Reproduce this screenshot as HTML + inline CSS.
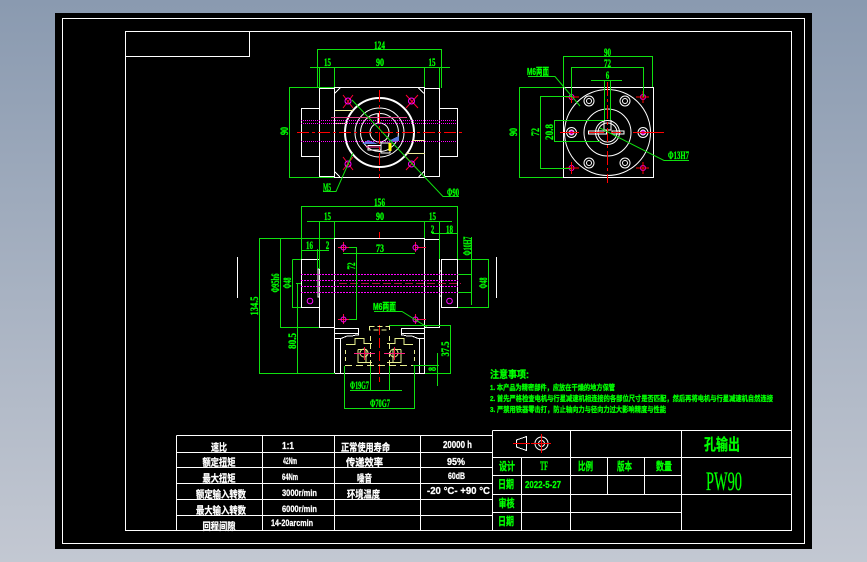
<!DOCTYPE html>
<html><head><meta charset="utf-8"><style>
html,body{margin:0;padding:0;width:867px;height:562px;overflow:hidden;background:linear-gradient(#8a9ab0,#c3c8d2)}
svg{position:absolute;left:0;top:0}
text{font-family:"Liberation Sans","Noto Sans CJK SC",sans-serif;font-weight:700}
.g text{fill:#0f0;stroke:#0f0;stroke-width:.3}
.w text{fill:#fff;stroke:#fff;stroke-width:.25}
.d text{font-family:"Liberation Serif","Noto Sans CJK SC",serif;font-size:12px}
</style></head><body>
<svg width="867" height="562" viewBox="0 0 867 562" xmlns="http://www.w3.org/2000/svg" shape-rendering="crispEdges">
<rect x="55" y="13" width="757" height="536" fill="#000"/>
<g fill="none" stroke="#fff" stroke-width="1">
<rect x="62.5" y="18.5" width="742" height="525"/>
<rect x="125.5" y="31.5" width="666" height="499"/>
<path d="M125.5 56.5H249.5V31.5"/>
<path d="M176.5 435.5H492.5M176.5 452.5H492.5M176.5 467.5H492.5M176.5 483.5H492.5M176.5 499.5H492.5M176.5 515.5H492.5M176.5 435.5V530.5M262.5 435.5V530.5M334.5 435.5V530.5M420.5 435.5V530.5M492.5 430.5V530.5"/>
<path d="M492.5 430.5H791.5M492.5 457.5H791.5M492.5 475.5H681.5M492.5 494.5H791.5M492.5 512.5H681.5M521.5 457.5V530.5M570.5 430.5V530.5M607.5 457.5V494.5M644.5 457.5V494.5M681.5 430.5V530.5"/>
<path d="M526.5 436.5V450.5L516.5 447V440Z"/>
<circle cx="541.5" cy="443.5" r="6.5" shape-rendering="auto"/><circle cx="541.5" cy="443.5" r="3" shape-rendering="auto"/>
</g>
<path d="M513 443.5H530M531 443.5H551M541.5 434V453" stroke="#f00" fill="none"/>

<!-- TOP VIEW -->
<g fill="none" stroke="#fff">
<rect x="319.5" y="88.5" width="15" height="88"/><rect x="424.5" y="88.5" width="15" height="88"/>
<rect x="334.5" y="87.5" width="90" height="90"/>
<rect x="301.5" y="108.5" width="18" height="48"/><rect x="439.5" y="108.5" width="18" height="48"/>
<path d="M334.5 93.5L340 88M424 93.5L418.5 88M334.5 171.5L340 177M424 171.5L418.5 177"/>
<circle cx="379.5" cy="132.5" r="34.5" stroke-width="2" shape-rendering="auto"/>
<circle cx="379.5" cy="132.5" r="24.5" shape-rendering="auto"/><circle cx="379.5" cy="132.5" r="19" shape-rendering="auto"/><circle cx="379.5" cy="132.5" r="9.5" shape-rendering="auto"/>
<path d="M368 145.5H381V150H368ZM381 143H390V153H381Z"/>
<path d="M378.5 114V123" stroke-width="2"/>
</g>
<path d="M362 144L368 140 378 144ZM388 141L399 136V141L394 142Z" fill="#5577dd"/>
<path d="M366 147H380" stroke="#ff3399"/>
<path d="M390 143V151" stroke="#ff0" stroke-width="3"/>
<path d="M335 110.5H353M336 123.5H348M412 140.5H425M406 153.5H425" stroke="#ee9" fill="none"/>
<path d="M331 117.5H407" stroke="#e0408a" fill="none"/>
<path d="M301 120.5H457M301 123.5H457M301 141.5H457" stroke="#f0f" stroke-dasharray="1 1" fill="none"/>
<path d="M297 132.5H465M379.5 90V178" stroke="#f00" stroke-dasharray="12 3 3 3" fill="none"/>
<g stroke="#f03" fill="none" shape-rendering="auto">
<path d="M343 95L353 108M353 95L343 108M406 95L418 108M418 95L406 108M343 157L353 170M353 157L343 170M406 157L418 170M418 157L406 170"/></g>
<g fill="none" stroke="#f0f" shape-rendering="auto"><circle cx="348" cy="101" r="3"/><circle cx="411.500" cy="101" r="3"/><circle cx="348" cy="164" r="3"/><circle cx="411.500" cy="164" r="3"/></g>
<g fill="none" stroke="#10e010">
<path d="M317.5 88V49.5H441.5V88M310 67.5H450M319.5 67V88M334.5 67V87M424.500 67V87M439.500 67V88"/>
<path d="M334 87.500H289.500V177.500H334"/>
<path d="M323 191.500H336L353 153" shape-rendering="auto"/>
<path d="M352 100L443 196.500H459" shape-rendering="auto"/>
</g>

<!-- RIGHT VIEW -->
<g fill="none" stroke="#fff">
<rect x="563.500" y="87.500" width="90" height="90"/>
<g shape-rendering="auto">
<circle cx="607.500" cy="132.500" r="43"/><circle cx="607.500" cy="132.500" r="23.500"/><circle cx="607.500" cy="132.500" r="12"/><circle cx="607.500" cy="132.500" r="9.500"/>
<circle cx="589" cy="101" r="5"/><circle cx="589" cy="101" r="2.500"/>
<circle cx="625" cy="101" r="5"/><circle cx="625" cy="101" r="2.500"/>
<circle cx="589" cy="163" r="5"/><circle cx="589" cy="163" r="2.500"/>
<circle cx="625" cy="163" r="5"/><circle cx="625" cy="163" r="2.500"/>
<circle cx="571.500" cy="132.500" r="5"/><circle cx="571.500" cy="132.500" r="2.500"/>
<circle cx="643" cy="132.500" r="5"/><circle cx="643" cy="132.500" r="2.500"/></g>
<rect x="588.500" y="131" width="18" height="3"/><rect x="612" y="131" width="12" height="3"/>
<path d="M604 120V130H611V120"/>
</g>
<g fill="none" stroke="#f0f" shape-rendering="auto"><circle cx="571.500" cy="97" r="2.500"/><circle cx="643" cy="97" r="2.500"/><circle cx="571.500" cy="168" r="2.500"/><circle cx="643" cy="168" r="2.500"/><circle cx="571.500" cy="132.500" r="1.500"/><circle cx="643" cy="132.500" r="1.500"/></g>
<path d="M560 132.500H579M589 132.500H604M611 132.500H621M633 132.500H664M565.500 97H579M636 97H649M565.500 168H579M636 168H649M571.500 91V103M643 91V103M571.500 162V174M643 162V174" stroke="#f00" fill="none"/>
<path d="M607.500 82V183" stroke="#f00" fill="none" stroke-dasharray="14 3 3 3"/>
<g fill="none" stroke="#10e010">
<path d="M563.500 87V56.500H652.500V87M571.500 97V67.500H643.500V97M591 80.500H622M604.500 81V120M610.500 81V120"/>
<path d="M563 87.500H519.500V177.500H563M571 96.500H540.500V168.500H571M604 120.500H554.500V141.500H600"/>
<path d="M528 76.500H555L580 106" shape-rendering="auto"/>
<path d="M600 128L664 160.500H689" shape-rendering="auto"/>
</g>

<!-- FRONT VIEW -->
<g fill="none" stroke="#fff">
<rect x="334.500" y="238.500" width="90" height="135"/>
<path d="M334.500 238.500H319.500V327.500H334.500M424.500 239.500H439.500V327.500H424.500"/>
<path d="M319.500 269H318V297H319.500M439.500 271H441.500V296H439.500"/>
<rect x="301.500" y="259.500" width="18" height="48"/><rect x="441.500" y="259.500" width="16" height="48"/>
<path d="M334.500 328.500H358.500V333.500H334.500M424.500 328.500H401.500V333.500H424.500M334.500 338.500H341L347 336H352L356 335H358.500V333.500M424.500 338.500H418L412 336H407L403 335H401.500V333.500"/>
<path d="M340.500 338V373M419.500 338V373"/>
</g>
<path d="M237.500 257V298M496.500 257V298" stroke="#fff" fill="none"/>
<g fill="none" stroke="#f0f" shape-rendering="auto"><circle cx="310" cy="301" r="2.800"/><circle cx="449.500" cy="301" r="2.800"/></g>
<path d="M301 274.500H458M301 280.500H458M301 286.500H458M301 292.500H458" stroke="#f0f" stroke-dasharray="2 1" fill="none"/>
<path d="M339 283.500H461" stroke="#b01040" stroke-dasharray="8 3" fill="none"/>
<path d="M379.500 232V238M379.500 325V382" stroke="#f00" stroke-dasharray="10 3" fill="none"/>
<g fill="none" stroke="#e8f090">
<path d="M369.500 326.500H389.500M369.500 326V330H389.500V326M370.500 336V372M389.500 336V372" stroke-dasharray="5 3"/>
<path d="M346 344.500H355V338.500H364V343.500H372M413 344.500H404V338.500H395V343.500H387M358 349.500H366V362.500H372M401 349.500H393V362.500H387M358 349.500V362.500H372M401 349.500V362.500H387"/>
<path d="M345.500 350V362M414.500 350V362" stroke-dasharray="4 3"/>
<path d="M345 365.500H415" stroke-dasharray="7 4"/>
<circle cx="364" cy="353" r="4" shape-rendering="auto"/><circle cx="394" cy="353" r="4" shape-rendering="auto"/>
</g>
<path d="M354 353.500H375M384 353.500H405" stroke="#ff2080" fill="none"/>
<path d="M364.500 347V360M394.500 347V360M338 247.500H349M415 247.500H426M338 319.500H349M415 319.500H426M343.500 242V252M415.500 242V252M343.500 314V324M415.500 314V324" stroke="#f01040" fill="none"/>
<g fill="none" stroke="#f0f" shape-rendering="auto"><circle cx="343.500" cy="247.500" r="2.500"/><circle cx="415.500" cy="247.500" r="2.500"/><circle cx="343.500" cy="319.500" r="2.500"/><circle cx="415.500" cy="319.500" r="2.500"/></g>
<g fill="none" stroke="#10e010">
<path d="M301.500 259V206.500H457.500V259M307 221.500H452M319.500 221V269M334.500 221V238M424.500 221V238M439.500 221V259M432 233.500H457"/>
<path d="M301 250.500H329M317.500 249V269"/>
<path d="M259 238.500H334M259.500 238V373.500H335M280.500 239V327.500H319M292.500 259.500H301M292.500 259.500V307.500H301"/>
<path d="M296 283.500H301M297.500 283V373"/>
<path d="M458 259.500H488.500V307.500H458M458 274.500H472M458 292.500H472M471.500 237V305"/>
<path d="M343 253.500H415M349 247.500H356.500V319.500H349"/>
<path d="M374 311.500H402L427 327" shape-rendering="auto"/>
<path d="M389 325.500H450.500V373.500H425M413 365.500H439M437.500 353V386"/>
<path d="M350 390.500H402M370.500 366V390M389.500 366V390"/>
<path d="M344.500 366V408.500H414.500V366"/>
</g>

<!-- dim text -->
<g class="g d" text-anchor="middle">
<text x="379.500" y="49" textLength="11" lengthAdjust="spacingAndGlyphs">124</text>
<text x="327.500" y="66" textLength="7" lengthAdjust="spacingAndGlyphs">15</text><text x="380" y="66" textLength="8" lengthAdjust="spacingAndGlyphs">90</text><text x="432" y="66" textLength="7" lengthAdjust="spacingAndGlyphs">15</text>
<text transform="translate(288,131) rotate(-90)" textLength="8" lengthAdjust="spacingAndGlyphs">90</text>
<text x="327" y="191" textLength="8" lengthAdjust="spacingAndGlyphs">M5</text>
<text x="453" y="196" textLength="12" lengthAdjust="spacingAndGlyphs">Φ90</text>
<text x="607.500" y="56" textLength="7" lengthAdjust="spacingAndGlyphs">90</text><text x="607.500" y="67" textLength="7" lengthAdjust="spacingAndGlyphs">72</text><text x="607.500" y="79" textLength="3.500" lengthAdjust="spacingAndGlyphs">6</text>
<text transform="translate(517,132) rotate(-90)" textLength="8" lengthAdjust="spacingAndGlyphs">90</text>
<text transform="translate(539,132) rotate(-90)" textLength="8" lengthAdjust="spacingAndGlyphs">72</text>
<text transform="translate(553,132) rotate(-90)" textLength="16" lengthAdjust="spacingAndGlyphs">20.8</text>
<text x="678.500" y="159" textLength="21" lengthAdjust="spacingAndGlyphs">Φ13H7</text>
<text x="379.500" y="206" textLength="11" lengthAdjust="spacingAndGlyphs">156</text>
<text x="327.500" y="220" textLength="7" lengthAdjust="spacingAndGlyphs">15</text><text x="380" y="220" textLength="8" lengthAdjust="spacingAndGlyphs">90</text><text x="432.500" y="220" textLength="7" lengthAdjust="spacingAndGlyphs">15</text>
<text x="432.500" y="233" textLength="3.500" lengthAdjust="spacingAndGlyphs">2</text><text x="449.500" y="233" textLength="7" lengthAdjust="spacingAndGlyphs">18</text>
<text x="309.500" y="249" textLength="7" lengthAdjust="spacingAndGlyphs">16</text><text x="327.500" y="249" textLength="3.500" lengthAdjust="spacingAndGlyphs">2</text>
<text x="380" y="252" textLength="8" lengthAdjust="spacingAndGlyphs">73</text>
<text transform="translate(355,266) rotate(-90)" textLength="7" lengthAdjust="spacingAndGlyphs">72</text>
<text transform="translate(471,246) rotate(-90)" textLength="19" lengthAdjust="spacingAndGlyphs">Φ10H7</text>
<text transform="translate(279,283) rotate(-90)" textLength="19" lengthAdjust="spacingAndGlyphs">Φ95h6</text>
<text transform="translate(291,283) rotate(-90)" textLength="11" lengthAdjust="spacingAndGlyphs">Φ48</text>
<text transform="translate(487,283) rotate(-90)" textLength="11" lengthAdjust="spacingAndGlyphs">Φ48</text>
<text transform="translate(258,306) rotate(-90)" textLength="19" lengthAdjust="spacingAndGlyphs">134.5</text>
<text transform="translate(296,341) rotate(-90)" textLength="16" lengthAdjust="spacingAndGlyphs">80.5</text>
<text transform="translate(449,349) rotate(-90)" textLength="15" lengthAdjust="spacingAndGlyphs">37.5</text>
<text transform="translate(436,369) rotate(-90)" textLength="4" lengthAdjust="spacingAndGlyphs">8</text>
<text x="359.500" y="389" textLength="19" lengthAdjust="spacingAndGlyphs">Φ19G7</text>
<text x="380" y="407" textLength="20" lengthAdjust="spacingAndGlyphs">Φ70G7</text>
</g>
<g class="g" text-anchor="middle">
<text x="538" y="75" font-size="10" textLength="22" lengthAdjust="spacingAndGlyphs">M6两面</text>
<text x="384.500" y="310" font-size="10" textLength="23" lengthAdjust="spacingAndGlyphs">M6两面</text>
</g>

<!-- notes -->
<g class="g">
<text x="490" y="378" font-size="10" textLength="39" lengthAdjust="spacingAndGlyphs">注意事项:</text>
<text x="490" y="390" font-size="7.500" textLength="125" lengthAdjust="spacingAndGlyphs">1. 本产品为精密部件，应放在干燥的地方保管</text>
<text x="490" y="401" font-size="7.500" textLength="283" lengthAdjust="spacingAndGlyphs">2. 首先严格检查电机与行星减速机相连接的各部位尺寸是否匹配，然后再将电机与行星减速机自然连接</text>
<text x="490" y="412" font-size="7.500" textLength="176" lengthAdjust="spacingAndGlyphs">3. 严禁用铁器零击打，防止轴向力与径向力过大影响精度与性能</text>
</g>

<!-- table text -->
<g class="w" text-anchor="middle" font-size="10">
<text x="219" y="451" textLength="16" lengthAdjust="spacingAndGlyphs">速比</text>
<text x="219" y="466" textLength="33" lengthAdjust="spacingAndGlyphs">额定扭矩</text>
<text x="219" y="482" textLength="33" lengthAdjust="spacingAndGlyphs">最大扭矩</text>
<text x="221" y="498" textLength="50" lengthAdjust="spacingAndGlyphs">额定输入转数</text>
<text x="221" y="514" textLength="50" lengthAdjust="spacingAndGlyphs">最大输入转数</text>
<text x="219" y="530" textLength="33" lengthAdjust="spacingAndGlyphs">回程间隙</text>
<text x="288" y="449" textLength="12" lengthAdjust="spacingAndGlyphs">1:1</text>
<text x="290" y="464" font-size="9" textLength="14" lengthAdjust="spacingAndGlyphs">42Nm</text>
<text x="290" y="480" font-size="9" textLength="16" lengthAdjust="spacingAndGlyphs">64Nm</text>
<text x="299.500" y="496" font-size="9.500" textLength="35" lengthAdjust="spacingAndGlyphs">3000r/min</text>
<text x="299.500" y="512" font-size="9.500" textLength="35" lengthAdjust="spacingAndGlyphs">6000r/min</text>
<text x="292" y="526" font-size="9.500" textLength="42" lengthAdjust="spacingAndGlyphs">14-20arcmin</text>
<text x="365.500" y="451" textLength="49" lengthAdjust="spacingAndGlyphs">正常使用寿命</text>
<text x="364.500" y="466" textLength="37" lengthAdjust="spacingAndGlyphs">传递效率</text>
<text x="364.500" y="482" textLength="15" lengthAdjust="spacingAndGlyphs">噪音</text>
<text x="363.500" y="498" textLength="33" lengthAdjust="spacingAndGlyphs">环境温度</text>
<text x="457.500" y="448" font-size="10" textLength="29" lengthAdjust="spacingAndGlyphs">20000 h</text>
<text x="456" y="465" font-size="10.500" textLength="18" lengthAdjust="spacingAndGlyphs">95%</text>
<text x="456.500" y="479" font-size="9.500" textLength="17" lengthAdjust="spacingAndGlyphs">60dB</text>
<text x="458.500" y="494" font-size="10" textLength="63" lengthAdjust="spacingAndGlyphs">-20 °C- +90 °C</text>
</g>

<!-- title text -->
<g class="g" text-anchor="middle" font-size="11">
<text x="507" y="470" textLength="16" lengthAdjust="spacingAndGlyphs">设计</text>
<text x="544" y="470" font-size="13" textLength="8" lengthAdjust="spacingAndGlyphs" style="font-family:'Liberation Serif',serif">TF</text>
<text x="585.500" y="470" textLength="15" lengthAdjust="spacingAndGlyphs">比例</text>
<text x="624.500" y="470" textLength="15" lengthAdjust="spacingAndGlyphs">版本</text>
<text x="664" y="470" textLength="16" lengthAdjust="spacingAndGlyphs">数量</text>
<text x="506" y="488" textLength="16" lengthAdjust="spacingAndGlyphs">日期</text>
<text x="543" y="488" font-size="10.500" textLength="36" lengthAdjust="spacingAndGlyphs">2022-5-27</text>
<text x="506.500" y="507" textLength="16" lengthAdjust="spacingAndGlyphs">审核</text>
<text x="506" y="525" textLength="16" lengthAdjust="spacingAndGlyphs">日期</text>
<text x="722" y="450" font-size="16" textLength="36" lengthAdjust="spacingAndGlyphs">孔输出</text>
<text x="724" y="490" font-size="26" textLength="36" lengthAdjust="spacingAndGlyphs" style="font-family:'Liberation Serif',serif;font-weight:400">PW90</text>
</g>
</svg>
</body></html>
